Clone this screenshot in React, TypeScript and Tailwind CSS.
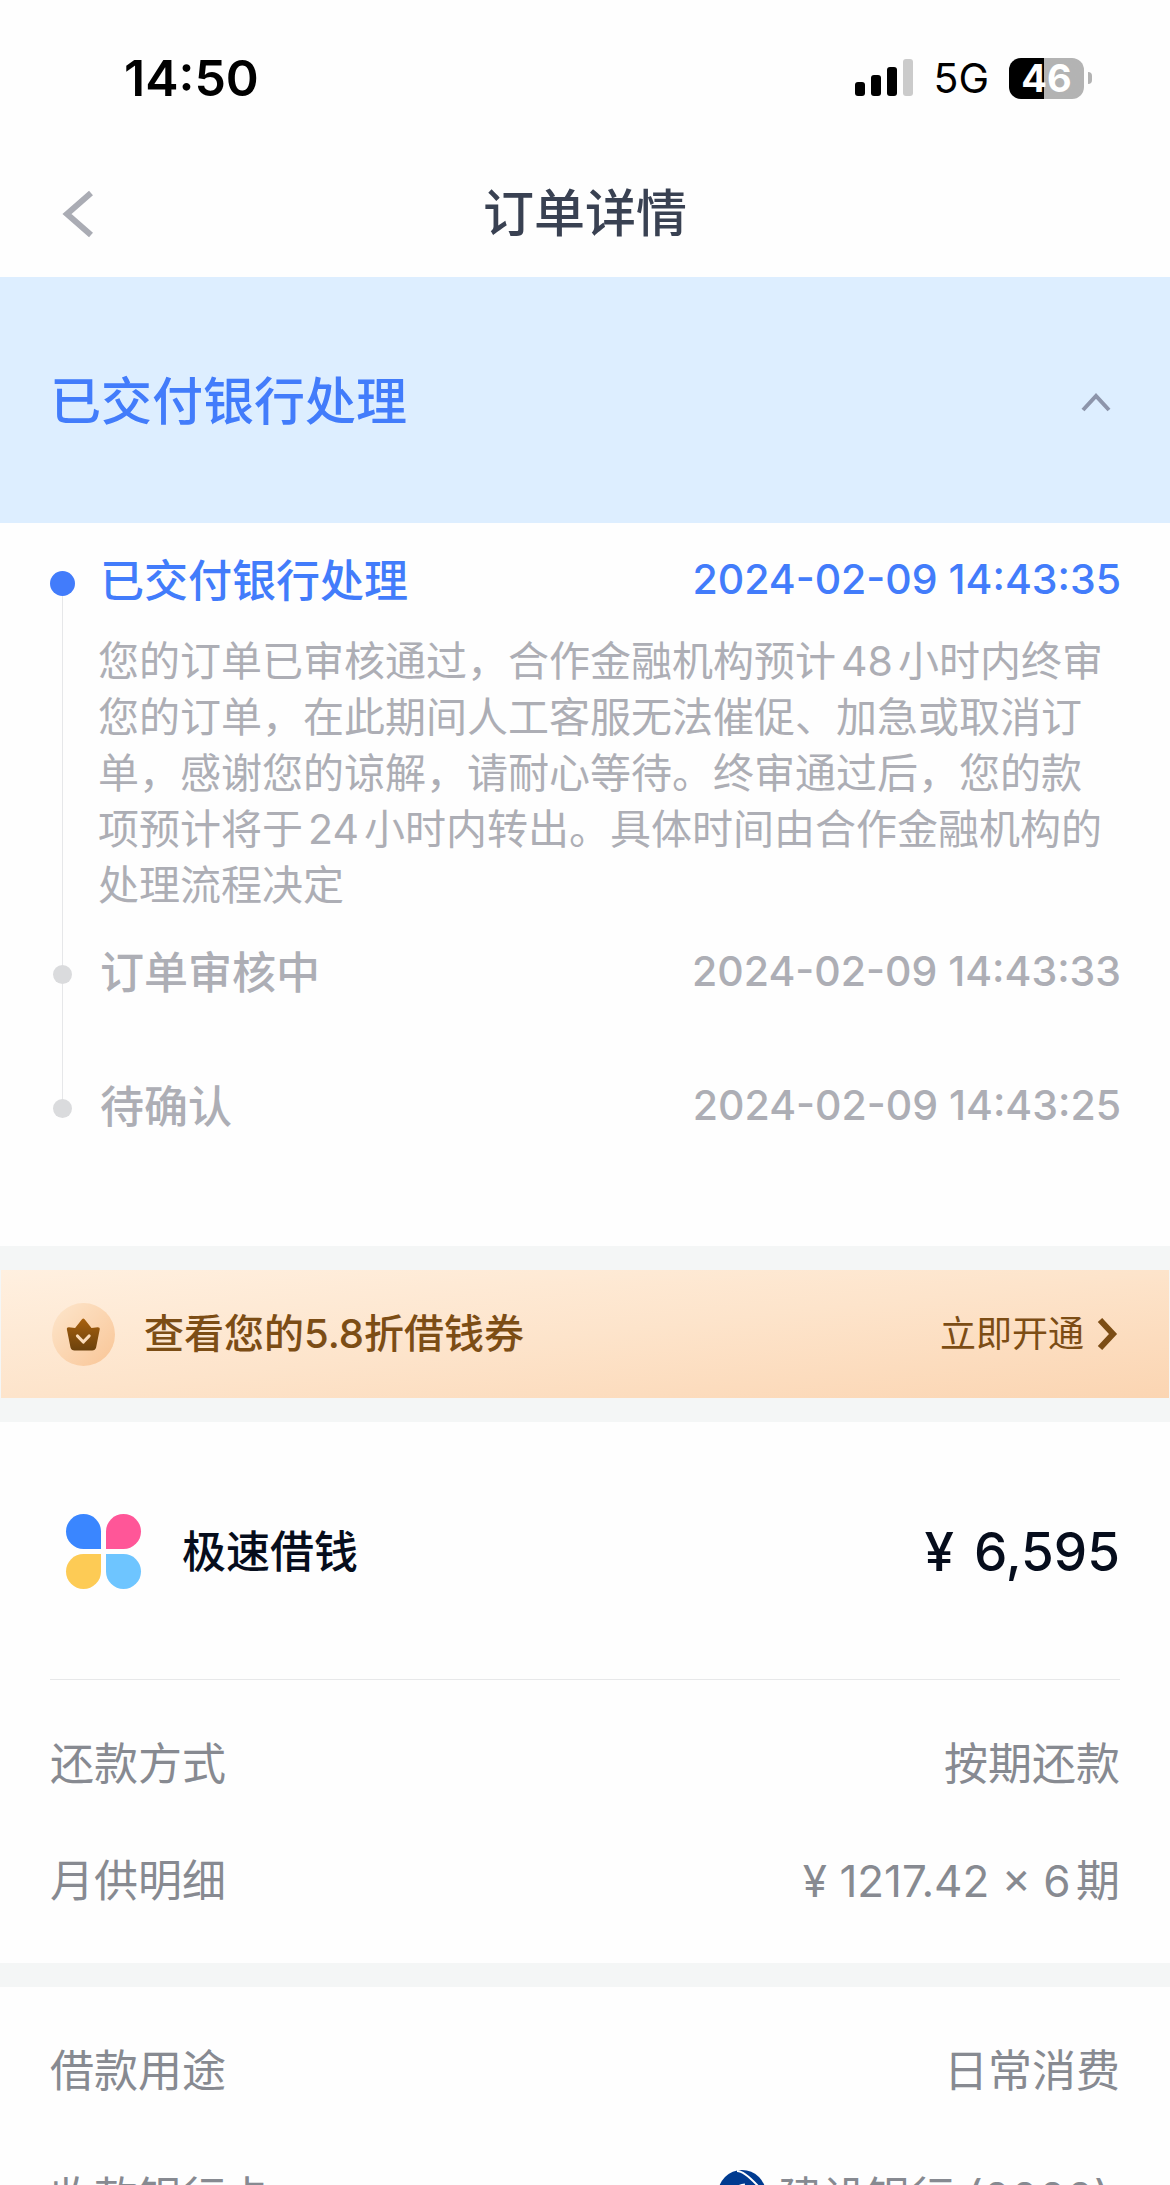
import { useState } from 'react'
import type { ReactNode } from 'react'

interface TimelineStep {
  title: string
  time: string
  detail?: string
}

const STEPS: TimelineStep[] = [
  {
    title: '已交付银行处理',
    time: '2024-02-09 14:43:35',
    detail:
      '您的订单已审核通过，合作金融机构预计48小时内终审您的订单，在此期间人工客服无法催促、加急或取消订单，感谢您的谅解，请耐心等待。终审通过后，您的款项预计将于24小时内转出。具体时间由合作金融机构的处理流程决定',
  },
  { title: '订单审核中', time: '2024-02-09 14:43:33' },
  { title: '待确认', time: '2024-02-09 14:43:25' },
]

function SignalIcon() {
  return (
    <svg width="58" height="38" viewBox="0 0 58 38" aria-hidden="true">
      <rect x="0" y="23" width="10" height="14" rx="3" fill="#000" />
      <rect x="16" y="16" width="10" height="21" rx="3" fill="#000" />
      <rect x="32" y="8" width="10" height="29" rx="3" fill="#000" />
      <rect x="48" y="0" width="10" height="37" rx="3" fill="#cbcbcb" />
    </svg>
  )
}

function CrownIcon() {
  return (
    <svg width="63" height="63" viewBox="0 0 63 63" aria-hidden="true">
      <defs>
        <linearGradient id="coin" x1="0" y1="0" x2="1" y2="1">
          <stop offset="0" stopColor="#fde6cc" />
          <stop offset="1" stopColor="#f9c596" />
        </linearGradient>
        <linearGradient id="crown" x1="0" y1="0" x2="0" y2="1">
          <stop offset="0" stopColor="#a8610f" />
          <stop offset="1" stopColor="#6b410c" />
        </linearGradient>
      </defs>
      <circle cx="31.5" cy="31.5" r="31.5" fill="url(#coin)" />
      <path
        d="M30 16.2q1.3-1.4 2.6 0L39.5 25l6.2-.8q2.4 0 2 2.4l-3.6 18q-.8 3-4 3H22.5q-3.2 0-4-3l-3.6-18q-.4-2.4 2-2.4l6.2.8z"
        fill="url(#crown)"
      />
      <path
        d="M25.5 33l5.8 6 5.8-6"
        fill="none"
        stroke="#fbdcbb"
        strokeWidth="3.2"
        strokeLinecap="round"
        strokeLinejoin="round"
      />
    </svg>
  )
}

function PetalLogo() {
  return (
    <div className="grid grid-cols-2 gap-[5px]" aria-hidden="true">
      <span className="size-[35px] rounded-full rounded-br-[5px] bg-[#3a86ff]" />
      <span className="size-[35px] rounded-full rounded-bl-[5px] bg-[#ff5698]" />
      <span className="size-[35px] rounded-full rounded-tr-[5px] bg-[#fdcb55]" />
      <span className="size-[35px] rounded-full rounded-tl-[5px] bg-[#6ec5ff]" />
    </div>
  )
}

function BankLogo() {
  return (
    <svg width="48" height="48" viewBox="0 0 48 48" aria-hidden="true">
      <circle cx="24" cy="24" r="24" fill="#003b90" />
      <path d="M19 1Q26 1 40 16" fill="none" stroke="#fff" strokeWidth="2" />
      <path
        d="M36 39a13 13 0 1 1-9-23"
        fill="none"
        stroke="#fff"
        strokeWidth="5"
      />
    </svg>
  )
}

function Row({ label, children }: { label: string; children: ReactNode }) {
  return (
    <>
      <dt>{label}</dt>
      <dd className="flex items-start gap-3">{children}</dd>
    </>
  )
}

export default function App() {
  const [expanded, setExpanded] = useState(true)

  return (
    <div className="flex h-screen flex-col overflow-hidden bg-[#fefefe] font-['Inter','Noto_Sans_CJK_SC',sans-serif] text-[44px] leading-[56px] text-[#878a91] [text-autospace:normal]">
      {/* Status bar */}
      <div className="flex h-[150px] shrink-0 items-center justify-between pt-[6px] pr-[78px] pl-[124px] text-black">
        <span className="text-[50px] font-semibold">14:50</span>
        <div className="flex items-center">
          <SignalIcon />
          <span className="ml-5 text-[41px]">5G</span>
          <span className="ml-5 flex h-[41px] w-[75px] items-center justify-center rounded-[12px] bg-linear-to-r from-black from-47% to-[#b3b3b3] to-47% text-[38px] font-bold text-white">
            46
          </span>
          <span className="ml-1 h-3 w-1 rounded-r-full bg-[#b3b3b3]" />
        </div>
      </div>

      {/* Nav bar */}
      <header className="grid h-[127px] shrink-0 grid-cols-[1fr_auto_1fr] items-center px-[62px]">
        <button type="button" aria-label="返回" className="justify-self-start">
          <svg width="34" height="50" viewBox="0 0 34 50" fill="none" aria-hidden="true">
            <path d="M29 4L5 25l24 21" stroke="#aaacb4" strokeWidth="6" />
          </svg>
        </button>
        <h1 className="text-[51px] font-medium text-[#394152]">订单详情</h1>
      </header>

      <main className="min-h-0 flex-1 overflow-y-auto [scrollbar-width:none]">
        <button
          type="button"
          onClick={() => setExpanded(!expanded)}
          aria-expanded={expanded}
          className="flex h-[246px] w-full items-center justify-between bg-[#ddeeff] pt-1 pr-[58px] pl-[50px] text-[51px] font-medium text-[#427cfb]"
        >
          已交付银行处理
          <svg
            width="32"
            height="20"
            viewBox="0 0 32 20"
            fill="none"
            className={expanded ? '' : 'rotate-180'}
            aria-hidden="true"
          >
            <path d="M3 18L16 4l13 14" stroke="#8d95ab" strokeWidth="4" />
          </svg>
        </button>

        {/* Progress timeline */}
        {expanded && (
          <ol className="pt-[30px] pr-[49px] pb-[111px] pl-[50px]">
            {STEPS.map((step, i) => {
              const current = i === 0
              const last = i === STEPS.length - 1
              return (
                <li key={step.time} className="flex gap-[23px]">
                  <div className="flex w-[25px] shrink-0 flex-col items-center">
                    <span className={`w-px ${current ? 'h-[18px]' : 'h-5 bg-[#e6e7e9]'}`} />
                    <span
                      className={`shrink-0 rounded-full ${
                        current ? 'size-[25px] bg-[#427cfb]' : 'size-[19px] bg-[#dadbdd]'
                      }`}
                    />
                    {!last && <span className="w-px flex-1 bg-[#e6e7e9]" />}
                  </div>
                  <div
                    className={`min-w-0 flex-1 ${step.detail ? 'pb-8' : last ? '' : 'pb-[78px]'}`}
                  >
                    <div
                      className={`flex items-start justify-between font-medium ${
                        current ? 'text-[#427cfb]' : 'text-[#adaeb5]'
                      }`}
                    >
                      <h2 className="pl-[2px]">{step.title}</h2>
                      <time className="text-[41px] leading-[52px]">{step.time}</time>
                    </div>
                    {step.detail && (
                      <p className="mt-6 text-[41px] text-[#adaeb5]">{step.detail}</p>
                    )}
                  </div>
                </li>
              )
            })}
          </ol>
        )}

        {/* Coupon banner */}
        <div className="bg-[#f4f6f6] px-px py-6">
          <a
            href="#coupon"
            className="flex h-[128px] items-center bg-linear-to-br from-[#fff0e0] via-[#fde4cb] to-[#fbd5b2] pr-[49px] pl-[51px] text-[#7c4d15]"
          >
            <CrownIcon />
            <span className="ml-[29px] flex-1 text-[40px] font-medium [text-autospace:no-autospace]">
              查看您的5.8折借钱券
            </span>
            <span className="text-[36px]">立即开通</span>
            <svg width="24" height="34" viewBox="0 0 24 34" fill="none" className="ml-3" aria-hidden="true">
              <path d="M4 3l13 14L4 31" stroke="#7c4d15" strokeWidth="6" />
            </svg>
          </a>
        </div>

        {/* Loan summary */}
        <section className="px-[50px]">
          <div className="flex h-[258px] items-center border-b border-[#e7e8e9] pt-[2px] pl-4 text-[#060d1c]">
            <PetalLogo />
            <h2 className="ml-[41px] flex-1 font-medium">极速借钱</h2>
            <span className="flex gap-5 text-[53px] font-medium">
              <span>¥</span>
              <span>6,595</span>
            </span>
          </div>
          <dl className="grid auto-rows-[117px] grid-cols-[1fr_auto] items-center justify-items-start pt-[25px] pb-6 [&>dd]:justify-self-end">
            <Row label="还款方式">按期还款</Row>
            <Row label="月供明细">¥ 1217.42 × 6期</Row>
          </dl>
        </section>

        <div className="h-6 bg-[#f4f6f6]" />

        {/* Loan account */}
        <section className="px-[50px]">
          <dl className="grid auto-rows-[127px] grid-cols-[1fr_auto] items-center justify-items-start py-5 [&>dd]:justify-self-end">
            <Row label="借款用途">日常消费</Row>
            <Row label="收款银行卡">
              <BankLogo />
              <span className="pr-[10px]">建设银行 (0000)</span>
            </Row>
          </dl>
        </section>
      </main>
    </div>
  )
}
